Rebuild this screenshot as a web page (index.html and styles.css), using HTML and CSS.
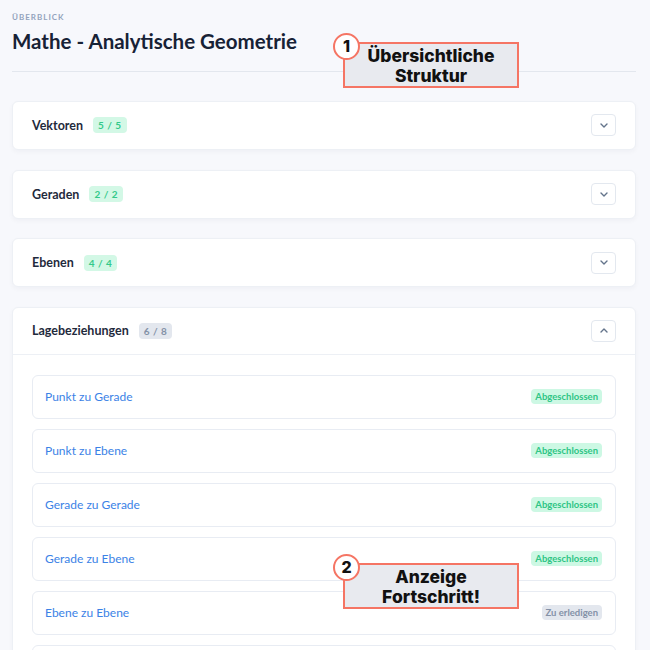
FILE: index.html
```html
<!DOCTYPE html>
<html lang="de">
<head>
<meta charset="utf-8">
<title>Überblick</title>
<link rel="stylesheet" href="styles.css">
</head>
<body>
<main class="page">
  <header class="head">
    <div class="eyebrow">ÜBERBLICK</div>
    <h1 class="title">Mathe - Analytische Geometrie</h1>
  </header>

  <section class="card">
    <div class="card-head">
      <span class="card-title">Vektoren</span>
      <span class="count done">5 / 5</span>
      <span class="toggle"><svg width="8" height="5" viewBox="0 0 8 5"><path d="M1 1l3 3 3-3" fill="none" stroke="#64748b" stroke-width="1.4" stroke-linecap="round" stroke-linejoin="round"/></svg></span>
    </div>
  </section>

  <section class="card">
    <div class="card-head">
      <span class="card-title">Geraden</span>
      <span class="count done">2 / 2</span>
      <span class="toggle"><svg width="8" height="5" viewBox="0 0 8 5"><path d="M1 1l3 3 3-3" fill="none" stroke="#64748b" stroke-width="1.4" stroke-linecap="round" stroke-linejoin="round"/></svg></span>
    </div>
  </section>

  <section class="card">
    <div class="card-head">
      <span class="card-title">Ebenen</span>
      <span class="count done">4 / 4</span>
      <span class="toggle"><svg width="8" height="5" viewBox="0 0 8 5"><path d="M1 1l3 3 3-3" fill="none" stroke="#64748b" stroke-width="1.4" stroke-linecap="round" stroke-linejoin="round"/></svg></span>
    </div>
  </section>

  <section class="card open">
    <div class="card-head bordered">
      <span class="card-title">Lagebeziehungen</span>
      <span class="count todo">6 / 8</span>
      <span class="toggle"><svg width="8" height="5" viewBox="0 0 8 5"><path d="M1 4l3-3 3 3" fill="none" stroke="#64748b" stroke-width="1.4" stroke-linecap="round" stroke-linejoin="round"/></svg></span>
    </div>
    <div class="card-body">
      <div class="item"><span class="item-name">Punkt zu Gerade</span><span class="status ok">Abgeschlossen</span></div>
      <div class="item"><span class="item-name">Punkt zu Ebene</span><span class="status ok">Abgeschlossen</span></div>
      <div class="item"><span class="item-name">Gerade zu Gerade</span><span class="status ok">Abgeschlossen</span></div>
      <div class="item"><span class="item-name">Gerade zu Ebene</span><span class="status ok">Abgeschlossen</span></div>
      <div class="item"><span class="item-name">Ebene zu Ebene</span><span class="status open-s">Zu erledigen</span></div>
      <div class="item"></div>
    </div>
  </section>
</main>

<div class="note note-1"><span class="num">1</span>Übersichtliche<br>Struktur</div>
<div class="note note-2"><span class="num">2</span>Anzeige<br>Fortschritt!</div>
</body>
</html>
```

FILE: styles.css
```css
* { box-sizing: border-box; }
html, body { margin: 0; padding: 0; }
body {
  background: #f7f8fc;
  font-family: "Lato", "Noto Sans", sans-serif;
  color: #1e293b;
  width: 650px;
  height: 650px;
  overflow: hidden;
  position: relative;
}
.page {
  padding: 11px 14px 0 12px;
  display: flex;
  flex-direction: column;
  gap: 19.67px;
}
.head {
  border-bottom: 1px solid #e3e7ee;
  padding-bottom: 17px;
  margin-bottom: 9.33px;
}
.eyebrow {
  font-size: 8px;
  font-weight: 700;
  letter-spacing: 1px;
  color: #93a3bd;
  line-height: 12px;
}
.title {
  margin: 5px 0 0;
  font-size: 20.5px;
  font-weight: 700;
  color: #172236;
  line-height: 26px;
}
.card {
  background: #fff;
  border: 1px solid #edf0f5;
  border-radius: 6px;
  box-shadow: 0 2px 5px rgba(30, 41, 59, 0.035);
}
.card-head {
  height: 47px;
  display: flex;
  align-items: center;
  padding: 0 19px 0 19px;
}
.card-head.bordered { border-bottom: 1px solid #edf0f5; }
.card-title {
  font-size: 12.5px;
  font-weight: 700;
  color: #1f2a3c;
}
.count {
  margin-left: 10px;
  font-size: 10px;
  font-weight: 700;
  padding: 0 5px;
  height: 16px;
  line-height: 16px;
  border-radius: 4px;
  letter-spacing: 0.5px;
}
.count.done { background: #d3f8e6; color: #33c98a; }
.count.todo { background: #e3e7ee; color: #8391a7; }
.toggle {
  margin-left: auto;
  width: 25px;
  height: 22px;
  border: 1px solid #e3e8ef;
  border-radius: 4px;
  display: flex;
  align-items: center;
  justify-content: center;
  background: #fff;
}
.card-body {
  padding: 20px 19px 0 19px;
  display: flex;
  flex-direction: column;
  gap: 10px;
}
.item {
  height: 44px;
  border: 1px solid #e8ecf3;
  border-radius: 6px;
  display: flex;
  align-items: center;
  justify-content: space-between;
  padding: 0 13px 0 12px;
  background: #fff;
}
.item-name {
  font-size: 12px;
  color: #3b82e6;
}
.status {
  font-size: 9.5px;
  font-weight: 700;
  padding: 0 4px;
  height: 15px;
  line-height: 15px;
  border-radius: 4px;
}
.status.ok { background: #cdf8e4; color: #2fc585; }
.status.open-s { background: #e3e7ee; color: #8391a7; }

.note {
  position: absolute;
  width: 176px;
  height: 46px;
  background: #e8eaef;
  border: 2px solid #f57564;
  font-family: "Inter", "Noto Sans", sans-serif;
  font-weight: 800;
  font-size: 17.5px;
  line-height: 20px;
  color: #111;
  text-align: center;
  padding-top: 2px;
}
.note-1 { left: 343px; top: 42px; }
.note-2 { left: 343px; top: 563px; }
.num {
  position: absolute;
  left: -12px;
  top: -11px;
  width: 27px;
  height: 27px;
  border-radius: 50%;
  border: 2px solid #f57564;
  background: #fff;
  font-size: 16px;
  line-height: 23px;
  text-align: center;
}
```
